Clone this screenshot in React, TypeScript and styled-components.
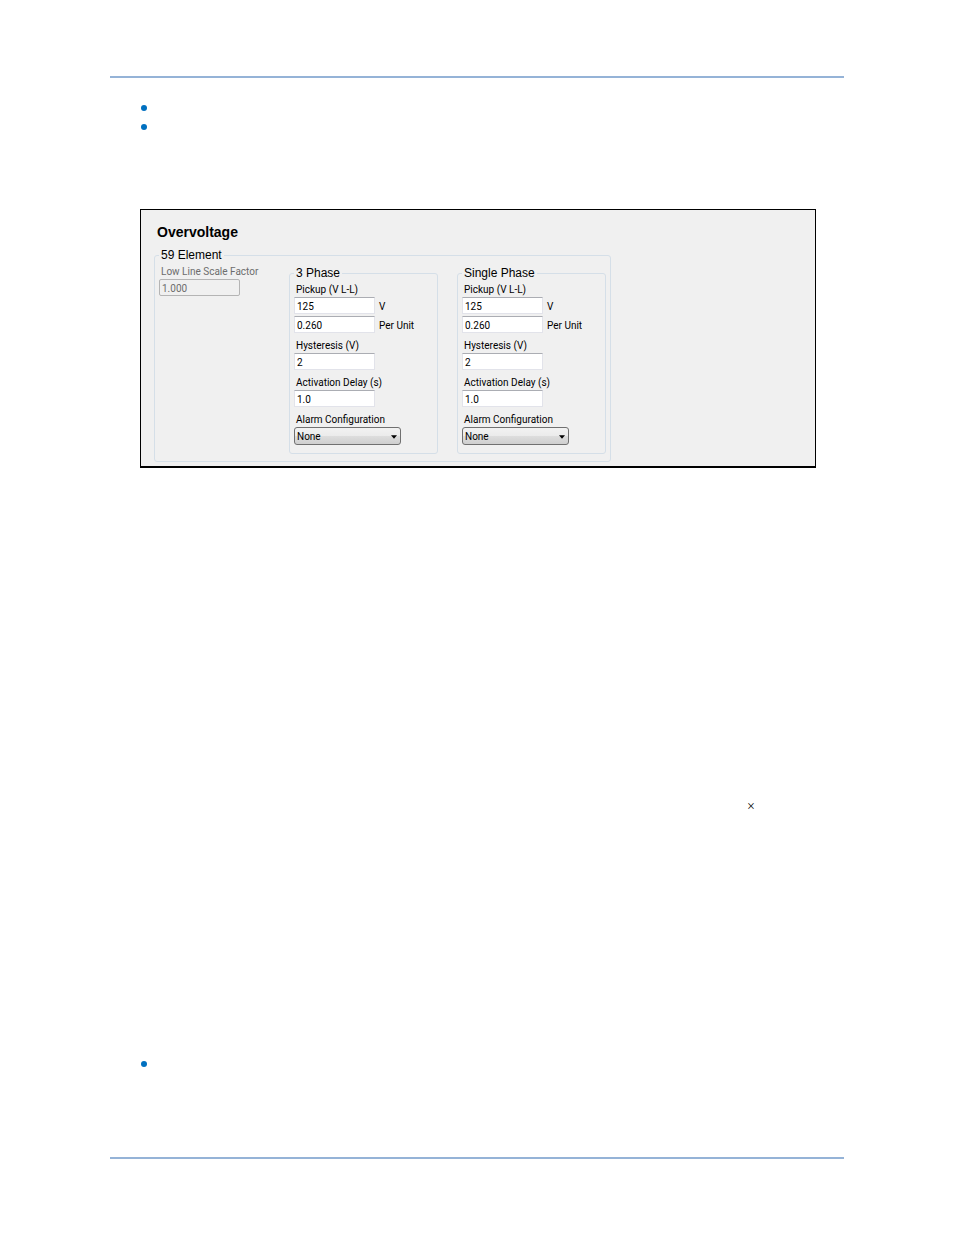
import React, { useId } from 'react';
import styled, { createGlobalStyle } from 'styled-components';

type PhaseProps = {
    title: string;
};

const PhaseGroup = ({ title }: PhaseProps) => {
    const id = useId();

    return (
        <Group $inner>
            <GroupTitle>{title}</GroupTitle>
            <Fields>
                <div>
                    <Label htmlFor={id + 'pickup'}>Pickup (V L-L)</Label>
                    <PickupInputs>
                        <UnitRow>
                            <TextBox id={id + 'pickup'} defaultValue='125' />
                            <Unit>V</Unit>
                        </UnitRow>
                        <UnitRow>
                            <TextBox id={id + 'unit'} defaultValue='0.260' />
                            <Unit as='label' htmlFor={id + 'unit'}>Per Unit</Unit>
                        </UnitRow>
                    </PickupInputs>
                </div>
                <div>
                    <Label htmlFor={id + 'hysteresis'}>Hysteresis (V)</Label>
                    <TextBox id={id + 'hysteresis'} defaultValue='2' />
                </div>
                <div>
                    <Label htmlFor={id + 'delay'}>Activation Delay (s)</Label>
                    <TextBox id={id + 'delay'} defaultValue='1.0' />
                </div>
                <div>
                    <Label htmlFor={id + 'alarm'}>Alarm Configuration</Label>
                    <SelectWrap>
                        <Select id={id + 'alarm'} defaultValue='None'>
                            <option>None</option>
                        </Select>
                        <Arrow viewBox='0 0 7 4' aria-hidden='true'>
                            <path d='M0 0h7L3.5 4z' fill='#000' />
                        </Arrow>
                    </SelectWrap>
                </div>
            </Fields>
        </Group>
    );
};

const App = () => {
    return (
        <>
            <GlobalStyle />
            <Page>
                <Bullets>
                    <Bullet />
                    <Bullet />
                </Bullets>

                <Panel>
                    <Title>Overvoltage</Title>
                    <Group>
                        <GroupTitle>59 Element</GroupTitle>
                        <Columns>
                            <div>
                                <Label htmlFor='scale' $muted>Low Line Scale Factor</Label>
                                <TextBox id='scale' defaultValue='1.000' disabled />
                            </div>
                            <PhaseGroup title='3 Phase' />
                            <PhaseGroup title='Single Phase' />
                        </Columns>
                    </Group>
                </Panel>

                <Formula>×</Formula>

                <Bullets>
                    <Bullet />
                </Bullets>
            </Page>
        </>
    );
};

export default App;

// stylesheet

const formFont = "Roboto, 'Liberation Sans', sans-serif";

const GlobalStyle = createGlobalStyle`
    * {
        box-sizing: border-box;
    }

    body {
        margin: 0;
        background: #fff;
        color: #000;
        font-family: 'Liberation Sans', Arial, sans-serif;
    }
`

const Page = styled.div`
    min-height: 100vh;
    padding: 76px 110px;
    display: flex;
    flex-direction: column;

    /* header and footer rules */
    &::before, &::after {
        content: '';
        height: 2px;
        flex: none;
        background: #95b3d7;
    }

    &::before {
        margin-bottom: 20px;
    }

    &::after {
        margin-top: auto;
    }
`

const Bullets = styled.ul`
    list-style: none;
    margin: 0 31px;
    padding: 0;
`

const Bullet = styled.li`
    display: flex;
    align-items: center;
    height: 19px;

    &::before {
        content: '';
        width: 6px;
        height: 6px;
        border-radius: 50%;
        background: #0070c0;
    }
`

const Panel = styled.form`
    margin: 73px 28px 0 30px;
    padding: 14px 13px 4px;
    background: #f0f0f0;
    border: 1px solid #000;
    border-bottom-width: 2px;
`

const Title = styled.h1`
    margin: 0 0 8px 3px;
    font-size: 14px;
    line-height: 16px;
    font-weight: bold;
`

const Group = styled.fieldset<{ $inner?: boolean }>`
    width: fit-content;
    min-width: 0;
    margin: ${({ $inner }) => ($inner ? '2px 0 0' : '0')};
    padding: ${({ $inner }) => ($inner ? '2px 4px 8px' : '2px 4px 7px')};
    border: 1px solid #d5dfe8;
    border-radius: 3px;
`

const GroupTitle = styled.legend`
    padding: 0 2px;
    font-size: 12px;
    line-height: 14px;
`

const Columns = styled.div`
    display: grid;
    grid-template-columns: 111px 149px 149px;
    column-gap: 19px;
    align-items: start;

    > fieldset {
        width: auto;
    }
`

const Fields = styled.div`
    display: flex;
    flex-direction: column;
    gap: 5px;
`

const Label = styled.label<{ $muted?: boolean }>`
    display: block;
    padding: 1px 0 0 2px;
    font-family: ${formFont};
    font-size: 10px;
    line-height: 14px;
    white-space: nowrap;
    color: ${({ $muted }) => ($muted ? '#6d6d6d' : '#000')};
`

const PickupInputs = styled.div`
    display: grid;
    gap: 2px;
`

const UnitRow = styled.div`
    display: flex;
    align-items: center;
    gap: 4px;
`

const Unit = styled.span<{ htmlFor?: string }>`
    padding-top: 2px;
    font-family: ${formFont};
    font-size: 10px;
    line-height: 14px;
`

const TextBox = styled.input`
    display: block;
    width: 81px;
    height: 17px;
    padding: 2px 2px 0;
    border: 1px solid #e2e3ea;
    border-top-color: #abadb3;
    background: #fff;
    color: #000;
    font-family: ${formFont};
    font-size: 10px;

    &:disabled {
        border-color: #b4b4b4;
        border-radius: 2px;
        background: #f0f0f0;
        color: #6d6d6d;
    }
`

const SelectWrap = styled.div`
    position: relative;
    width: 107px;
`

const Select = styled.select`
    display: block;
    appearance: none;
    width: 100%;
    height: 18px;
    padding: 1px 2px 0;
    border: 1px solid #707070;
    border-radius: 3px;
    background: linear-gradient(#f2f2f2 0%, #ebebeb 50%, #dddddd 51%, #cfcfcf 100%);
    color: #000;
    font-family: ${formFont};
    font-size: 10px;
`

const Arrow = styled.svg`
    position: absolute;
    top: 8px;
    right: 4px;
    width: 6px;
    height: 4px;
    pointer-events: none;
`

const Formula = styled.p`
    margin: 329px 89px 238px;
    font-family: 'Liberation Serif', serif;
    font-size: 14px;
    line-height: 19px;
    text-align: right;
`
